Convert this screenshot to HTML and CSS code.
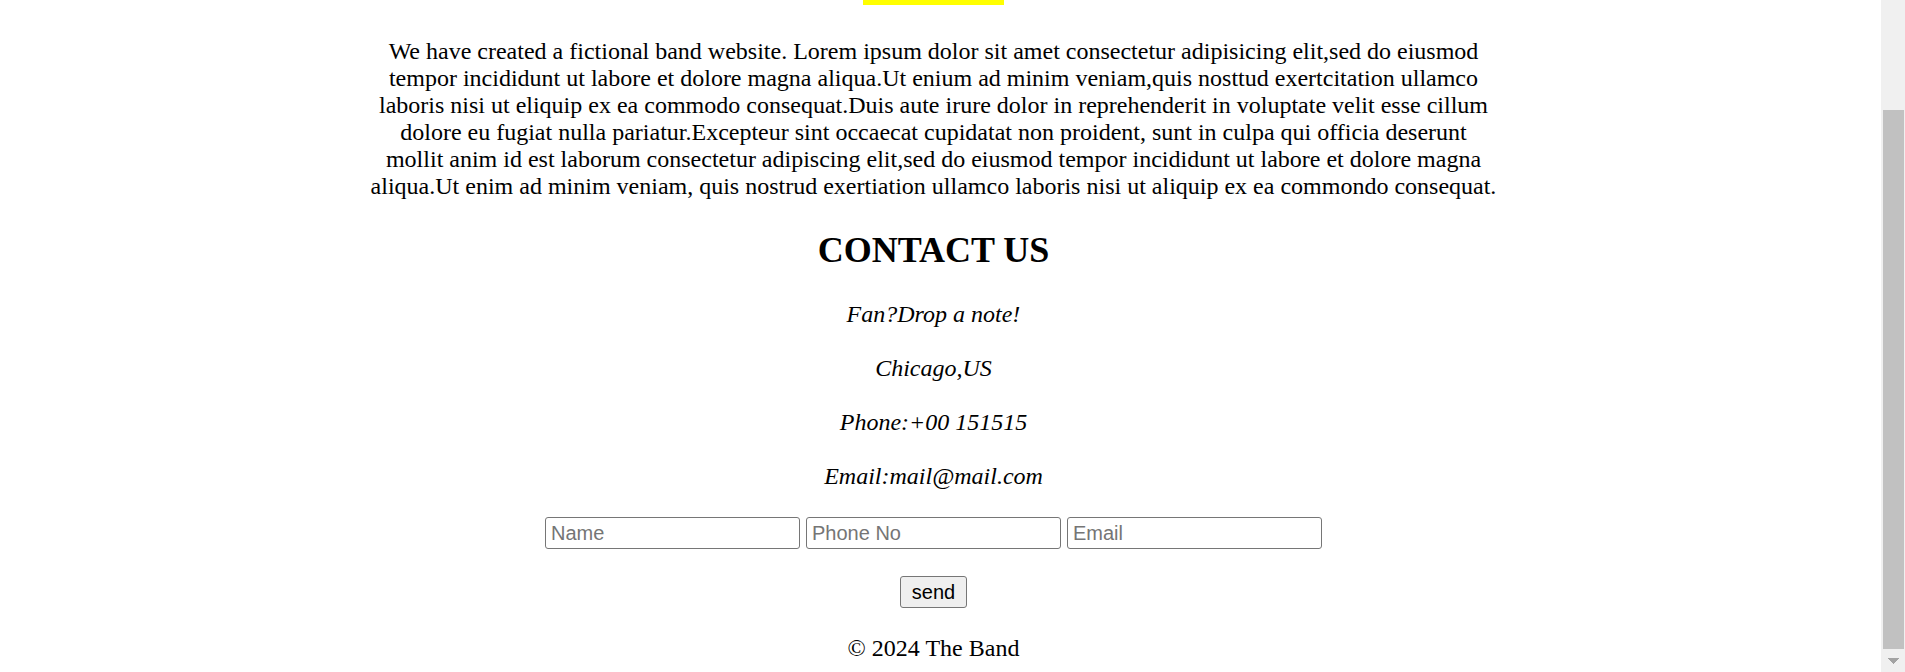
FILE: index.html
```html
<!DOCTYPE html>
<html lang="en">
<head>
<meta charset="utf-8">
<meta name="viewport" content="width=device-width, initial-scale=1">
<title>The Band</title>
<link rel="stylesheet" href="styles.css">
</head>
<body class="page">
<div class="content">
  <div class="accent"></div>
  <main class="main">
    <p class="about">We have created a fictional band website. Lorem ipsum dolor sit amet consectetur adipisicing elit,sed do eiusmod<br>
    tempor incididunt ut labore et dolore magna aliqua.Ut enium ad minim veniam,quis nosttud exertcitation ullamco<br>
    laboris nisi ut eliquip ex ea commodo consequat.Duis aute irure dolor in reprehenderit in voluptate velit esse cillum<br>
    dolore eu fugiat nulla pariatur.Excepteur sint occaecat cupidatat non proident, sunt in culpa qui officia deserunt<br>
    mollit anim id est laborum consectetur adipiscing elit,sed do eiusmod tempor incididunt ut labore et dolore magna<br>
    aliqua.Ut enim ad minim veniam, quis nostrud exertiation ullamco laboris nisi ut aliquip ex ea commondo consequat.</p>
    <h2 class="heading">CONTACT US</h2>
    <address class="contact">
      <span>Fan?Drop a note!</span>
      <span>Chicago,US</span>
      <span>Phone:+00 151515</span>
      <span>Email:mail@mail.com</span>
    </address>
    <form class="form">
      <div class="fields">
        <input class="field" type="text" placeholder="Name" aria-label="Name">
        <input class="field" type="tel" placeholder="Phone No" aria-label="Phone No">
        <input class="field" type="email" placeholder="Email" aria-label="Email">
      </div>
      <button class="send" type="button">send</button>
    </form>
  </main>
  <footer class="footer">© 2024 The Band</footer>
</div>
<div class="scrollbar" aria-hidden="true">
  <div class="thumb"></div>
  <svg class="arrow" width="11" height="6" viewBox="0 0 11 6" shape-rendering="crispEdges"><path d="M0 0h11v1h-1v1h-1v1h-1v1h-1v1h-1v1h-1v-1h-1v-1h-1v-1h-1v-1h-1v-1h-1z" fill="#a3a3a3"/></svg>
</div>
</body>
</html>
```
FILE: styles.css
```css
* {
  box-sizing: border-box;
}

.page {
  display: flex;
  min-height: 100vh;
  margin: 0;
  background: #fff;
  color: #000;
  font: 24px/27px "Liberation Serif", "Times New Roman", serif;
}

.content {
  flex: 1;
  min-width: 0;
  padding-right: 14px;
  text-align: center;
}

.accent {
  width: 141px;
  height: 5px;
  margin: 0 auto 33px;
  background: #ff0;
}

.about {
  margin: 0;
}

.heading {
  margin: 30px 0;
  font-size: 36px;
  line-height: 41px;
}

.contact {
  display: flex;
  flex-direction: column;
  gap: 27px;
}

.form {
  display: flex;
  flex-direction: column;
  align-items: center;
  gap: 27px;
  margin: 27px 0;
}

.fields {
  display: flex;
  flex-wrap: wrap;
  justify-content: center;
  gap: 6px;
}

.field,
.send {
  height: 32px;
  border: 1px solid #767676;
  border-radius: 3px;
  font: 20px/24px "Liberation Sans", Arial, sans-serif;
}

.field {
  width: 255px;
  padding: 2px 5px;
  background: #fff;
}

.field::placeholder {
  color: #757575;
}

.send {
  padding: 2px 11px;
  background: #efefef;
  color: #000;
}

.scrollbar {
  display: flex;
  flex-direction: column;
  align-items: center;
  width: 24px;
  height: 100vh;
  padding: 110px 0 8px;
  background: #f0f0f0;
}

.thumb {
  flex: 1;
  width: 21px;
  margin-bottom: 9px;
  background: #c1c1c1;
}
```
